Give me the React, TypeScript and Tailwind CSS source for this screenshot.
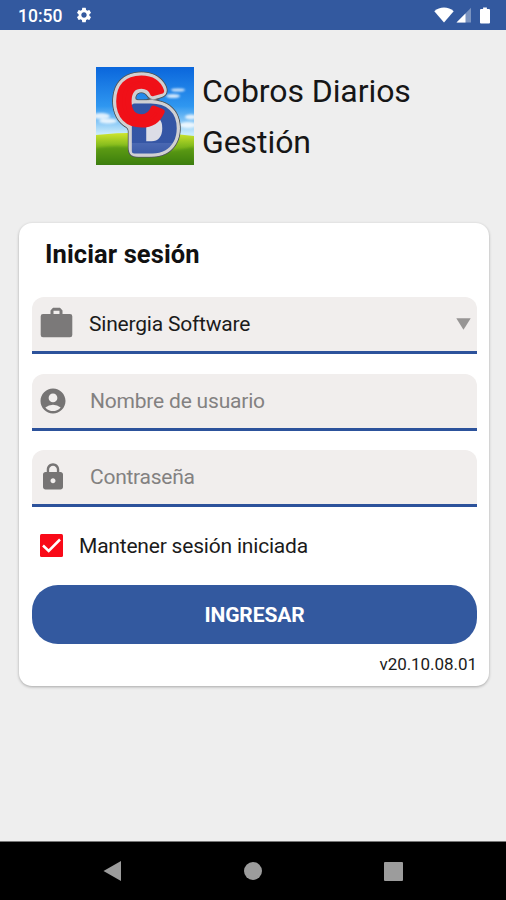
import React from 'react';
import { MdAccountCircle, MdLock, MdSettings } from 'react-icons/md';

function StatusBar() {
  return (
    <header className="flex h-[30px] items-center justify-between bg-[#33599f] pl-[18px] pr-[15px] text-white">
      <div className="flex items-center">
        <span className="w-[45px] whitespace-nowrap pt-px text-[17.5px] font-medium leading-[30px]">10:50</span>
        <MdSettings className="ml-[12px] h-[18px] w-[18px]" />
      </div>
      <div className="flex items-center">
        {/* Wifi */}
        <svg className="h-[16px] w-[20px]" viewBox="0 0 20 16" fill="currentColor">
          <path d="M0.3 4.2C5.5 -0.6 14.5 -0.6 19.7 4.2L10 15.5Z" />
        </svg>
        {/* Mobile signal */}
        <svg className="ml-[2px] h-[16px] w-[16px]" viewBox="0 0 16 16" fill="currentColor">
          <path d="M0.5 15.5L15 0.8V15.5Z" opacity=".35" />
          <path d="M0.5 15.5L9.5 6.4V15.5Z" />
        </svg>
        {/* Battery */}
        <svg className="ml-[7px] h-[17px] w-[12px]" viewBox="0 0 12 18" fill="currentColor">
          <path d="M4 0.5H8V2.2H10.2Q11.3 2.2 11.3 3.3V16.3Q11.3 17.4 10.2 17.4H1.8Q0.7 17.4 0.7 16.3V3.3Q0.7 2.2 1.8 2.2H4Z" />
        </svg>
      </div>
    </header>
  );
}

function Logo() {
  return (
    <svg className="h-[98px] w-[98px] shrink-0" viewBox="0 0 98 98" aria-label="CD">
      <defs>
        <linearGradient id="sky" x1="0" y1="0" x2="0" y2="1">
          <stop offset="0" stopColor="#0a66dc" />
          <stop offset=".4" stopColor="#2f97f0" />
          <stop offset=".68" stopColor="#c9ebfb" />
        </linearGradient>
        <linearGradient id="grass" x1="0" y1="0" x2="0" y2="1">
          <stop offset="0" stopColor="#d0e62e" />
          <stop offset=".4" stopColor="#84bb1d" />
          <stop offset="1" stopColor="#38780f" />
        </linearGradient>
        <linearGradient id="blue" x1="0" y1="0" x2="0" y2="1">
          <stop offset="0" stopColor="#3254a4" />
          <stop offset=".7" stopColor="#3556a5" />
          <stop offset=".71" stopColor="#4a68b2" />
          <stop offset="1" stopColor="#2c4e9e" />
        </linearGradient>
        <filter id="soft">
          <feGaussianBlur stdDeviation="1.2" />
        </filter>
        {/* Silver rim with a thin dark edge round both letters */}
        <filter id="rim" x="-20%" y="-20%" width="140%" height="140%" colorInterpolationFilters="sRGB">
          <feGaussianBlur in="SourceAlpha" stdDeviation="2.8" result="halo" />
          <feComponentTransfer in="halo" result="wide">
            <feFuncA type="linear" slope="28" intercept="-0.9" />
          </feComponentTransfer>
          <feComponentTransfer in="halo" result="narrow">
            <feFuncA type="linear" slope="16" intercept="-1.1" />
          </feComponentTransfer>
          <feFlood floodColor="#4e565c" />
          <feComposite in2="wide" operator="in" result="dark" />
          <feFlood floodColor="#d0d0d3" />
          <feComposite in2="narrow" operator="in" result="silver" />
          <feMerge>
            <feMergeNode in="dark" />
            <feMergeNode in="silver" />
            <feMergeNode in="SourceGraphic" />
          </feMerge>
        </filter>
      </defs>
      <rect width="98" height="98" fill="url(#sky)" />
      <g fill="#fff" opacity=".8" filter="url(#soft)">
        <ellipse cx="5" cy="49" rx="9" ry="3" />
        <ellipse cx="12" cy="54" rx="9" ry="2.5" />
        <ellipse cx="82" cy="23" rx="7" ry="1.6" />
        <ellipse cx="77" cy="29" rx="7" ry="2" />
        <ellipse cx="95" cy="50" rx="6" ry="2.5" />
        <ellipse cx="92" cy="58" rx="9" ry="3" />
      </g>
      <path d="M0 68Q45 63 98 69V98H0Z" fill="url(#grass)" />
      <path d="M0 81Q25 77 45 82T98 80V98H0Z" fill="#3f8511" opacity=".5" filter="url(#soft)" />
      <g
        filter="url(#rim)"
        fontFamily="'Liberation Sans', sans-serif"
        fontWeight="700"
        strokeLinejoin="round"
      >
        <rect x="48" y="54" width="18" height="24" fill="#dcdde6" />
        <text x="34" y="83.5" fontSize="65" fill="url(#blue)" stroke="url(#blue)" strokeWidth="5">D</text>
        <text x="20.5" y="56.5" fontSize="65" fill="#f01018" stroke="#f01018" strokeWidth="6">C</text>
      </g>
    </svg>
  );
}

function BriefcaseIcon() {
  return (
    <svg className="-mt-[3px] h-[31px] w-[33px]" viewBox="0 0 33 31" fill="#7b7979">
      <path
        fillRule="evenodd"
        d="M3 7H10.5V3.5L13 0.8H20L22.5 3.5V7H30Q32.3 7 32.3 9.3V28Q32.3 30.3 30 30.3H3Q0.7 30.3 0.7 28V9.3Q0.7 7 3 7ZM13.5 7H19.5V3.8H13.5Z"
      />
    </svg>
  );
}

interface FieldProps {
  icon: React.ReactNode;
  children: React.ReactNode;
  className?: string;
}

function Field({ icon, children, className = '' }: FieldProps) {
  return (
    <div className={`flex h-[57px] items-center rounded-t-[12px] border-b-[3px] border-[#2c529b] bg-[#f1eeed] ${className}`}>
      <div className="ml-[8px] w-[50px] shrink-0">{icon}</div>
      {children}
    </div>
  );
}

function LoginCard() {
  return (
    <main className="ml-[19px] mr-[17px] mt-[58px] flex h-[463px] flex-col rounded-[13px] bg-white pl-[13px] pr-[12px] shadow-[0_1px_3px_rgba(0,0,0,0.3)]">
      <h2 className="ml-[13px] mt-[15px] whitespace-nowrap text-[25.5px] font-bold leading-[32px] tracking-[0.1px] text-[#111]">
        Iniciar sesión
      </h2>
      <Field className="mt-[27px]" icon={<BriefcaseIcon />}>
        <span className="-ml-px flex-1 pt-[2px] text-[21px] tracking-[-0.2px] text-[#1b1b1b]">Sinergia Software</span>
        <svg className="mr-[6px] h-[12px] w-[15px]" viewBox="0 0 15 12" fill="#979594">
          <path d="M0.3 0.3H14.7L7.5 11.7Z" />
        </svg>
      </Field>
      <Field className="mt-[20px]" icon={<MdAccountCircle className="-ml-[2px] h-[30px] w-[30px] text-[#767474]" />}>
        <span className="pt-[2px] text-[21px] tracking-[-0.2px] text-[#838181]">Nombre de usuario</span>
      </Field>
      <Field className="mt-[19px]" icon={<MdLock className="-ml-[2px] h-[30px] w-[30px] text-[#767474]" />}>
        <span className="pt-[2px] text-[21px] tracking-[-0.25px] text-[#838181]">Contraseña</span>
      </Field>
      <div className="ml-[8px] mt-[26px] flex h-[24px] items-center">
        <svg className="h-[23px] w-[23px]" viewBox="0 0 23 23">
          <rect width="23" height="23" rx="1.5" fill="#f90a18" />
          <path d="M3 11.5L8.7 17L20 5.5" fill="none" stroke="#fff" strokeWidth="2.5" />
        </svg>
        <span className="ml-[16px] pt-[4px] text-[21px] tracking-[-0.2px] text-[#1b1b1b]">Mantener sesión iniciada</span>
      </div>
      <button className="mt-[28px] h-[59px] rounded-[26px] bg-[#33599f] pt-[2px] text-[21px] font-bold tracking-[-0.1px] text-white">
        INGRESAR
      </button>
      <p className="mt-[8px] text-right text-[17px] leading-[24px] tracking-[-0.05px] text-[#1b1b1b]">v20.10.08.01</p>
    </main>
  );
}

function NavBar() {
  return (
    <nav className="mt-auto flex h-[59px] items-center justify-between border-t border-[#777] bg-black pl-[103px] pr-[103px]">
      <svg className="h-[22px] w-[19px]" viewBox="0 0 19 22" fill="#9c9c9c">
        <path d="M18 1V21L0.5 11Z" />
      </svg>
      <div className="h-[18px] w-[18px] rounded-full bg-[#9c9c9c]" />
      <div className="h-[19px] w-[19px] rounded-[1px] bg-[#9c9c9c]" />
    </nav>
  );
}

export default function App() {
  return (
    <div className="flex h-[900px] w-[506px] flex-col overflow-hidden bg-[#eeeeee] font-['Roboto',sans-serif]">
      <StatusBar />
      <div className="ml-[96px] mt-[37px] flex h-[98px] items-center">
        <Logo />
        <h1 className="ml-[8px] whitespace-nowrap pt-[2px] text-[32px] leading-[51px] tracking-[-0.08px] text-[#161616]">
          Cobros Diarios
          <br />
          Gestión
        </h1>
      </div>
      <LoginCard />
      <NavBar />
    </div>
  );
}
